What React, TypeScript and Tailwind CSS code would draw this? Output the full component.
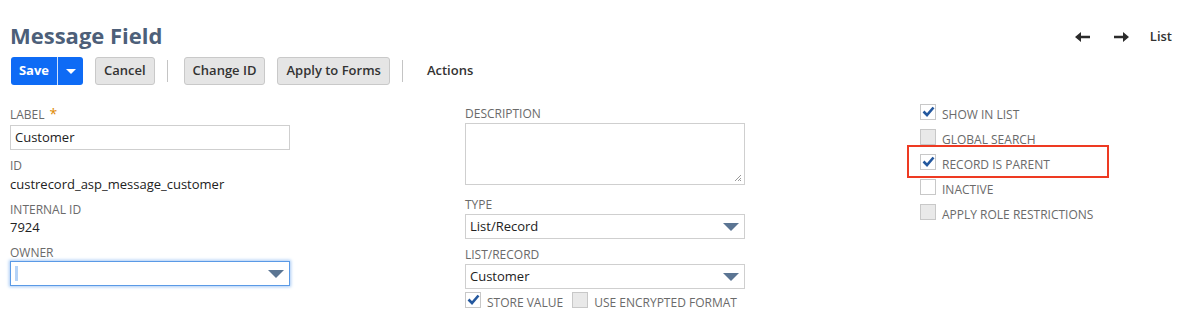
import React from "react";

function Caret() {
  return (
    <svg width="16" height="8" viewBox="0 0 16 8" className="shrink-0">
      <path d="M0 0 H16 L8 8 Z" fill="#5b7593" />
    </svg>
  );
}

function Arrow({ dir }: { dir: "left" | "right" }) {
  return (
    <svg width="15" height="10" viewBox="0 0 15 10" className={dir === "right" ? "rotate-180" : ""}>
      <path d="M0 5 L6 0 V3.8 H15 V6.2 H6 V10 Z" fill="#2b2b2b" />
    </svg>
  );
}

function Check({ checked, gray = true }: { checked?: boolean; gray?: boolean }) {
  return (
    <span
      className={`w-4 h-4 border border-[#c8c8c8] flex items-center justify-center shrink-0 ${
        checked ? "bg-white" : gray ? "bg-[#e9e9e9]" : "bg-white"
      }`}
    >
      {checked && (
        <svg width="13" height="11" viewBox="0 0 13 11">
          <path d="M1.5 5.5 L5 9 L11.5 1.5" stroke="#24589e" strokeWidth="2.6" fill="none" />
        </svg>
      )}
    </span>
  );
}

function Label({ text, required }: { text: string; required?: boolean }) {
  return (
    <div className="text-[12px] leading-[16px] text-[#6a6a6a] uppercase">
      {text}
      {required && <span className="text-[#e08a00] ml-[5px] text-[14px]">*</span>}
    </div>
  );
}

function Select({ value, focused }: { value: string; focused?: boolean }) {
  return (
    <div
      className={`w-[280px] h-[25px] flex items-center justify-between pl-[4px] pr-[5px] text-[13px] text-[#222] bg-white border ${
        focused ? "border-[#5a9ae6] shadow-[0_0_3px_1px_#a8cbf5]" : "border-[#cfcfcf]"
      }`}
    >
      {focused ? <span className="w-[3px] h-[15px] bg-[#b5d3f7]" /> : <span>{value}</span>}
      <Caret />
    </div>
  );
}

function CheckRow({ text, checked, gray }: { text: string; checked?: boolean; gray?: boolean }) {
  return (
    <div className="flex items-center gap-[6px] h-[25px]">
      <Check checked={checked} gray={gray} />
      <span className="text-[12px] leading-[14px] text-[#6a6a6a] uppercase mt-[6px]">{text}</span>
    </div>
  );
}

export default function App() {
  return (
    <div
      className="w-[1193px] h-[325px] bg-white overflow-hidden"
      style={{ fontFamily: '"Open Sans", "Liberation Sans", sans-serif' }}
    >
      <div className="flex items-center justify-between pl-[10px] pr-[21px] pt-[20px]">
        <h1 className="text-[22px] leading-[30px] font-bold text-[#4d5f79]">Message Field</h1>
        <div className="flex items-center text-[#333] text-[13px] mt-[4px]">
          <Arrow dir="left" />
          <span className="ml-[24px] flex">
            <Arrow dir="right" />
          </span>
          <span className="ml-[21px] font-semibold text-[#333]">List</span>
        </div>
      </div>

      <div className="flex items-center pl-[11px] pt-[7px] text-[13px] font-semibold">
        <div className="flex h-[28px] rounded-[3px] overflow-hidden bg-[#0e6bf5] text-white">
          <span className="w-[46px] flex items-center justify-center font-bold">Save</span>
          <span className="w-px bg-white/80" />
          <span className="w-[25px] flex items-center justify-center">
            <svg width="10" height="5" viewBox="0 0 10 5">
              <path d="M0 0 H10 L5 5 Z" fill="#fff" />
            </svg>
          </span>
        </div>
        <button className="ml-[12px] h-[28px] px-[8px] rounded-[3px] bg-[#e5e5e5] border border-[#c9c9c9] text-[#333]">
          Cancel
        </button>
        <span className="ml-[12px] w-px h-[22px] bg-[#c4c4c4]" />
        <button className="ml-[16px] h-[28px] px-[8px] rounded-[3px] bg-[#e5e5e5] border border-[#c9c9c9] text-[#333]">
          Change ID
        </button>
        <button className="ml-[12px] h-[28px] px-[8px] rounded-[3px] bg-[#e5e5e5] border border-[#c9c9c9] text-[#333]">
          Apply to Forms
        </button>
        <span className="ml-[12px] w-px h-[22px] bg-[#c4c4c4]" />
        <span className="ml-[24px] text-[#333]">Actions</span>
      </div>

      <div className="grid grid-cols-[455px_455px_1fr] pl-[10px] pt-[21px]">
        <div className="flex flex-col">
          <Label text="Label" required />
          <div className="mt-[2px] w-[280px] h-[25px] border border-[#cfcfcf] flex items-center pl-[4px] text-[13px] text-[#222]">
            Customer
          </div>
          <div className="mt-[8px]">
            <Label text="ID" />
          </div>
          <div className="mt-[1px] text-[13px] leading-[18px] text-[#222]">custrecord_asp_message_customer</div>
          <div className="mt-[9px]">
            <Label text="Internal ID" />
          </div>
          <div className="mt-[0px] text-[13px] leading-[18px] text-[#222]">7924</div>
          <div className="mt-[9px]">
            <Label text="Owner" />
          </div>
          <div className="mt-[0px]">
            <Select value="" focused />
          </div>
        </div>

        <div className="flex flex-col">
          <Label text="Description" />
          <div className="mt-[1px] w-[280px] h-[62px] border border-[#cfcfcf] relative">
            <svg width="8" height="8" viewBox="0 0 8 8" className="absolute right-[2px] bottom-[2px]">
              <path d="M7 1 L1 7 M7 4 L4 7 M7 6 L6 7" stroke="#999" strokeWidth="1" />
            </svg>
          </div>
          <div className="mt-[12px]">
            <Label text="Type" />
          </div>
          <div className="mt-[1px]">
            <Select value="List/Record" />
          </div>
          <div className="mt-[8px]">
            <Label text="List/Record" />
          </div>
          <div className="mt-[1px]">
            <Select value="Customer" />
          </div>
          <div className="flex items-center -mt-[2px]">
            <CheckRow text="Store Value" checked />
            <div className="ml-[9px]">
              <CheckRow text="Use Encrypted Format" />
            </div>
          </div>
        </div>

        <div className="flex flex-col -mt-[7px]">
          <CheckRow text="Show in List" checked />
          <CheckRow text="Global Search" />
          <div className="relative">
            <CheckRow text="Record is Parent" checked />
            <div className="absolute left-[-13px] top-[-4px] w-[202px] h-[33px] border-2 border-[#ee3a22]" />
          </div>
          <CheckRow text="Inactive" gray={false} />
          <CheckRow text="Apply Role Restrictions" />
        </div>
      </div>
    </div>
  );
}
